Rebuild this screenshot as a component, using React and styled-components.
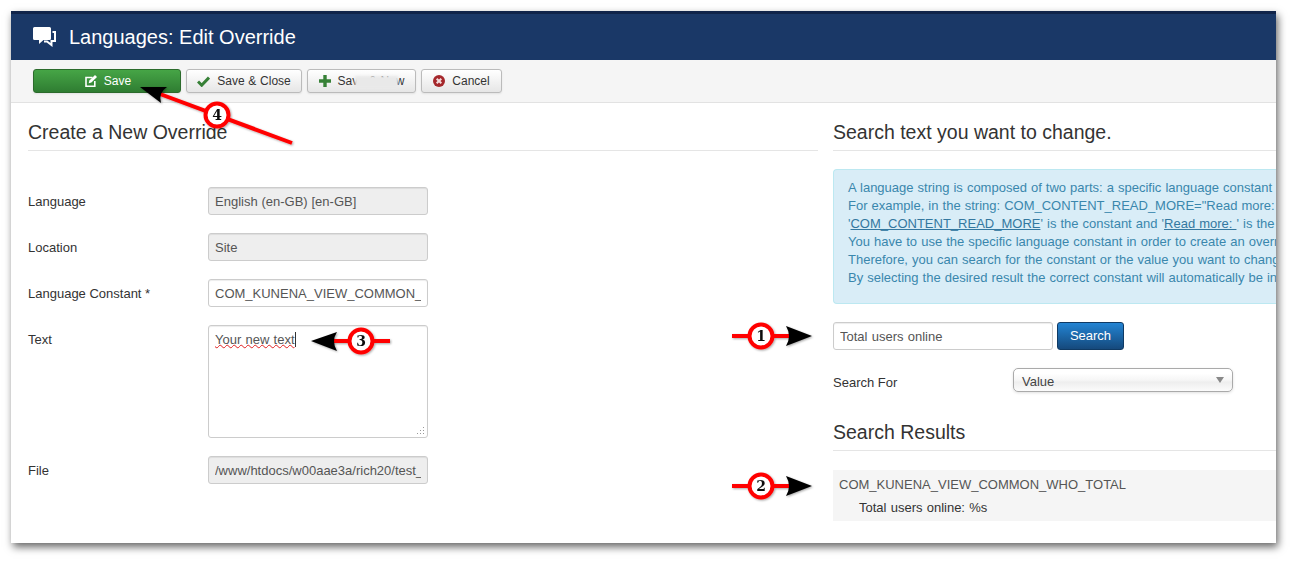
import React from "react";
import styled, { createGlobalStyle } from "styled-components";

const Global = createGlobalStyle`
  html, body { margin: 0; padding: 0; background: #fff; }
  body { font: 13px/18px "Liberation Sans", Arial, sans-serif; color: #333; }
  * { box-sizing: border-box; }
`;

const Stage = styled.div`
  position: relative;
  width: 1295px;
  height: 562px;
  overflow: hidden;
  padding: 11px 0 0 11px;
`;
const Shell = styled.div`
  width: 1265px;
  height: 532px;
  background: #fff;
  overflow: hidden;
  box-shadow: 2px 4px 8px rgba(0, 0, 0, 0.6);
`;
const Header = styled.header`
  height: 49px;
  background: #1a3867;
  border-top: 3px solid #10244a;
  display: flex;
  align-items: center;
  padding-left: 22px;
  gap: 12px;
  color: #fff;
`;
const Title = styled.h1`
  margin: 0;
  font-size: 20px;
  font-weight: 400;
  line-height: 24px;
`;
const Toolbar = styled.div`
  height: 43px;
  background: #f5f5f5;
  border-bottom: 1px solid #e2e2e2;
  padding: 9px 0 0 22px;
  display: flex;
  gap: 5px;
`;
const ToolButton = styled.button`
  position: relative;
  height: 24px;
  width: ${(p) => p.$w}px;
  padding: 0 0 0 ${(p) => p.$nudge || 0}px;
  display: flex;
  align-items: center;
  justify-content: center;
  gap: 7px;
  font: 12px/18px "Liberation Sans", Arial, sans-serif;
  word-spacing: 0.4px;
  border-radius: 3px;
  color: ${(p) => (p.$primary ? "#fff" : "#333")};
  border: 1px solid ${(p) => (p.$primary ? "#2c6b2c" : "#bbb")};
  background: ${(p) =>
    p.$primary
      ? "linear-gradient(#46a546, #2f7d32)"
      : "linear-gradient(#ffffff, #e6e6e6)"};
  box-shadow: 0 1px 2px rgba(0, 0, 0, 0.08);
`;
const Smudge = styled.span`
  position: absolute;
  left: 47px;
  top: 6px;
  width: 43px;
  height: 12px;
  background: #e9e9e9;
  filter: blur(1px);
`;
const Columns = styled.main`
  display: grid;
  grid-template-columns: 790px 1fr;
  column-gap: 15px;
  padding-left: 17px;
`;
const Column = styled.section`
  min-width: 0;
`;
const Heading = styled.h2`
  margin: ${(p) => p.$top || 17}px 0 0;
  padding-bottom: 6px;
  font-size: 19.5px;
  font-weight: 400;
  line-height: 24px;
  border-bottom: 1px solid #e5e5e5;
  white-space: nowrap;
`;
const Form = styled.div`
  margin-top: 36px;
  display: flex;
  flex-direction: column;
  gap: 18px;
`;
const FormRow = styled.div`
  display: flex;
`;
const Label = styled.label`
  width: 180px;
  padding-top: 6px;
  flex: none;
`;
const Field = styled.input`
  width: 220px;
  height: 28px;
  padding: 4px 6px;
  font: 13px/18px "Liberation Sans", Arial, sans-serif;
  word-spacing: ${(p) => (p.readOnly ? 0.2 : 0.6)}px;
  color: #555;
  border: 1px solid #ccc;
  border-radius: 3px;
  outline: none;
  background: ${(p) => (p.readOnly ? "#eeeeee" : "#fff")};
  box-shadow: inset 0 1px 1px rgba(0, 0, 0, 0.075);
`;
const TextBox = styled.div`
  position: relative;
  width: 220px;
  height: 113px;
  padding: 5px 6px;
  color: #555;
  word-spacing: 0.6px;
  border: 1px solid #ccc;
  border-radius: 3px;
  box-shadow: inset 0 1px 1px rgba(0, 0, 0, 0.075);
`;
const Squiggle = styled.span`
  text-decoration: underline wavy #e02020 1px;
  text-underline-offset: 0;
  border-right: 1px solid #333;
`;
const Grip = styled.svg`
  position: absolute;
  right: 1px;
  bottom: 1px;
`;
const Alert = styled.div`
  margin-top: 18px;
  height: 135px;
  padding: 9px 0 0 14px;
  background: #d9edf7;
  color: #3a87ad;
  word-spacing: 0.45px;
  border: 1px solid #bce8f1;
  border-right: 0;
  border-radius: 4px 0 0 4px;
  white-space: nowrap;
  overflow: hidden;
`;
const AlertLink = styled.span`
  color: #3478a0;
  text-decoration: underline;
`;
const SearchRow = styled.div`
  margin-top: 18px;
  display: flex;
  gap: 4px;
`;
const SearchButton = styled.button`
  width: 67px;
  height: 28px;
  padding: 0;
  font: 13px/18px "Liberation Sans", Arial, sans-serif;
  color: #fff;
  background: linear-gradient(#2384d3, #15497c);
  border: 1px solid #0f3a64;
  border-radius: 3px;
`;
const SelectRow = styled.div`
  margin-top: 18px;
  display: flex;
  align-items: flex-start;
`;
const SelectBox = styled.div`
  width: 220px;
  height: 24px;
  padding: 4px 8px 0;
  position: relative;
  color: #444;
  border: 1px solid #aaa;
  border-radius: 5px;
  background: linear-gradient(#fff 20%, #f6f6f6 50%, #eee 60%, #fbfbfb);
  box-shadow: 0 1px 3px rgba(0, 0, 0, 0.12);
`;
const Caret = styled.span`
  position: absolute;
  right: 8px;
  top: 8px;
  border: 4px solid transparent;
  border-top: 6px solid #888;
  border-bottom: 0;
`;
const Results = styled.div`
  margin-top: 19px;
  height: 51px;
  background: #f5f5f5;
  padding: 6px 0 0 6px;
`;
const ResultKey = styled.div`
  color: #555;
`;
const ResultValue = styled.div`
  margin-top: 5px;
  padding-left: 20px;
  word-spacing: 0.6px;
`;
const Overlay = styled.svg`
  position: absolute;
  inset: 0;
  pointer-events: none;
`;
const Badge = styled.text`
  font: 700 14px "DejaVu Serif", serif;
  fill: #111;
  text-anchor: middle;
`;

const Chat = () => (
  <svg width="24" height="20" viewBox="0 0 24 20">
    <path fill="#fff" d="M1.500 0h15A1.500 1.500 0 0 1 18 1.500v10a1.500 1.500 0 0 1-1.500 1.500H10.500L6 17v-4H1.500A1.500 1.500 0 0 1 0 11.500v-10A1.500 1.500 0 0 1 1.500 0z" />
    <path fill="none" stroke="#fff" strokeWidth="2" d="M19.500 5H22v9h-3.500v4L14 14.500h-3" />
  </svg>
);
const EditIcon = () => (
  <svg width="12" height="12" viewBox="0 0 12 12">
    <path fill="none" stroke="#fff" strokeWidth="1.600" d="M7.500 2.500H1v8.700h8.800V6" />
    <path fill="#fff" d="M10 0l2 2-5.600 5.600-2.700.7.700-2.700z" />
  </svg>
);
const CheckIcon = () => (
  <svg width="13" height="11" viewBox="0 0 13 11">
    <path fill="none" stroke="#378137" strokeWidth="3" d="M1 5.500l3.700 3.700L12 1.500" />
  </svg>
);
const PlusIcon = () => (
  <svg width="12" height="12" viewBox="0 0 12 12">
    <path fill="#378137" d="M4.300 0h3.400v4.300H12v3.400H7.700V12H4.300V7.700H0V4.300h4.300z" />
  </svg>
);
const CancelIcon = () => (
  <svg width="12" height="12" viewBox="0 0 12 12">
    <circle cx="6" cy="6" r="6" fill="#a5282c" />
    <path stroke="#f3dcdc" strokeWidth="2" d="M3.700 3.700l4.600 4.600M8.300 3.700L3.700 8.300" />
  </svg>
);

const Marker = ({ line, head, cx, cy, n }) => (
  <g>
    <polyline points={line} fill="none" stroke="#f00" strokeWidth="4" />
    <path d={head} fill="#000" />
    <circle cx={cx} cy={cy} r="11.500" fill="#fff" stroke="#f00" strokeWidth="4" />
    <Badge x={cx} y={cy + 5}>{n}</Badge>
  </g>
);

const markers = [
  { n: 1, line: "732,336 790,336", head: "M812 336 L786 326 Q792 336 786 346z", cx: 761, cy: 336 },
  { n: 2, line: "732,486 790,486", head: "M812 486 L786 476 Q792 486 786 496z", cx: 761, cy: 486 },
  { n: 3, line: "390,341 333,341", head: "M311 341 L337 332 Q331 341 337 351z", cx: 361, cy: 341 },
  { n: 4, line: "292,143 160,94", head: "M140 87 L167 87 Q158 93 161 103z", cx: 217, cy: 115 },
];

export default function App() {
  return (
    <Stage>
      <Global />
      <Shell>
        <Header>
          <Chat />
          <Title>Languages: Edit Override</Title>
        </Header>
        <Toolbar>
          <ToolButton $primary $w={148} $nudge={2}>
            <EditIcon />Save
          </ToolButton>
          <ToolButton $w={116}>
            <CheckIcon />Save &amp; Close
          </ToolButton>
          <ToolButton $w={109}>
            <PlusIcon />Save &amp; New
            <Smudge />
          </ToolButton>
          <ToolButton $w={81}>
            <CancelIcon />Cancel
          </ToolButton>
        </Toolbar>
        <Columns>
          <Column>
            <Heading>Create a New Override</Heading>
            <Form>
              <FormRow>
                <Label>Language</Label>
                <Field readOnly value="English (en-GB) [en-GB]" />
              </FormRow>
              <FormRow>
                <Label>Location</Label>
                <Field readOnly value="Site" />
              </FormRow>
              <FormRow>
                <Label>Language Constant *</Label>
                <Field defaultValue="COM_KUNENA_VIEW_COMMON_WHO_TOTAL" />
              </FormRow>
              <FormRow>
                <Label>Text</Label>
                <TextBox>
                  <Squiggle>Your new text</Squiggle>
                  <Grip width="11" height="11" viewBox="0 0 11 11" fill="#999">
                    <rect x="8" y="2" width="1" height="1" />
                    <rect x="5" y="5" width="1" height="1" />
                    <rect x="8" y="5" width="1" height="1" />
                    <rect x="2" y="8" width="1" height="1" />
                    <rect x="5" y="8" width="1" height="1" />
                    <rect x="8" y="8" width="1" height="1" />
                  </Grip>
                </TextBox>
              </FormRow>
              <FormRow>
                <Label>File</Label>
                <Field readOnly value="/www/htdocs/w00aae3a/rich20/test_joomla/language/overrides/en-GB.override.ini" />
              </FormRow>
            </Form>
          </Column>
          <Column>
            <Heading>Search text you want to change.</Heading>
            <Alert>
              A language string is composed of two parts: a specific language constant and its value.<br />
              For example, in the string: COM_CONTENT_READ_MORE="Read more: "<br />
              '<AlertLink>COM_CONTENT_READ_MORE</AlertLink>' is the constant and '<AlertLink>Read more: </AlertLink>' is the value.<br />
              You have to use the specific language constant in order to create an override of this value.<br />
              Therefore, you can search for the constant or the value you want to change with the form below.<br />
              By selecting the desired result the correct constant will automatically be inserted in the form.
            </Alert>
            <SearchRow>
              <Field defaultValue="Total users online" />
              <SearchButton>Search</SearchButton>
            </SearchRow>
            <SelectRow>
              <Label>Search For</Label>
              <SelectBox>Value<Caret /></SelectBox>
            </SelectRow>
            <Heading $top={28}>Search Results</Heading>
            <Results>
              <ResultKey>COM_KUNENA_VIEW_COMMON_WHO_TOTAL</ResultKey>
              <ResultValue>Total users online: %s</ResultValue>
            </Results>
          </Column>
        </Columns>
      </Shell>
      <Overlay width="1295" height="562" viewBox="0 0 1295 562">
        <defs>
          <filter id="soft" x="-10%" y="-10%" width="120%" height="120%">
            <feDropShadow dx="1" dy="1" stdDeviation="1" floodColor="#000" floodOpacity="0.35" />
          </filter>
        </defs>
        <g filter="url(#soft)">
          {markers.map((m) => (
            <Marker key={m.n} {...m} />
          ))}
        </g>
      </Overlay>
    </Stage>
  );
}
